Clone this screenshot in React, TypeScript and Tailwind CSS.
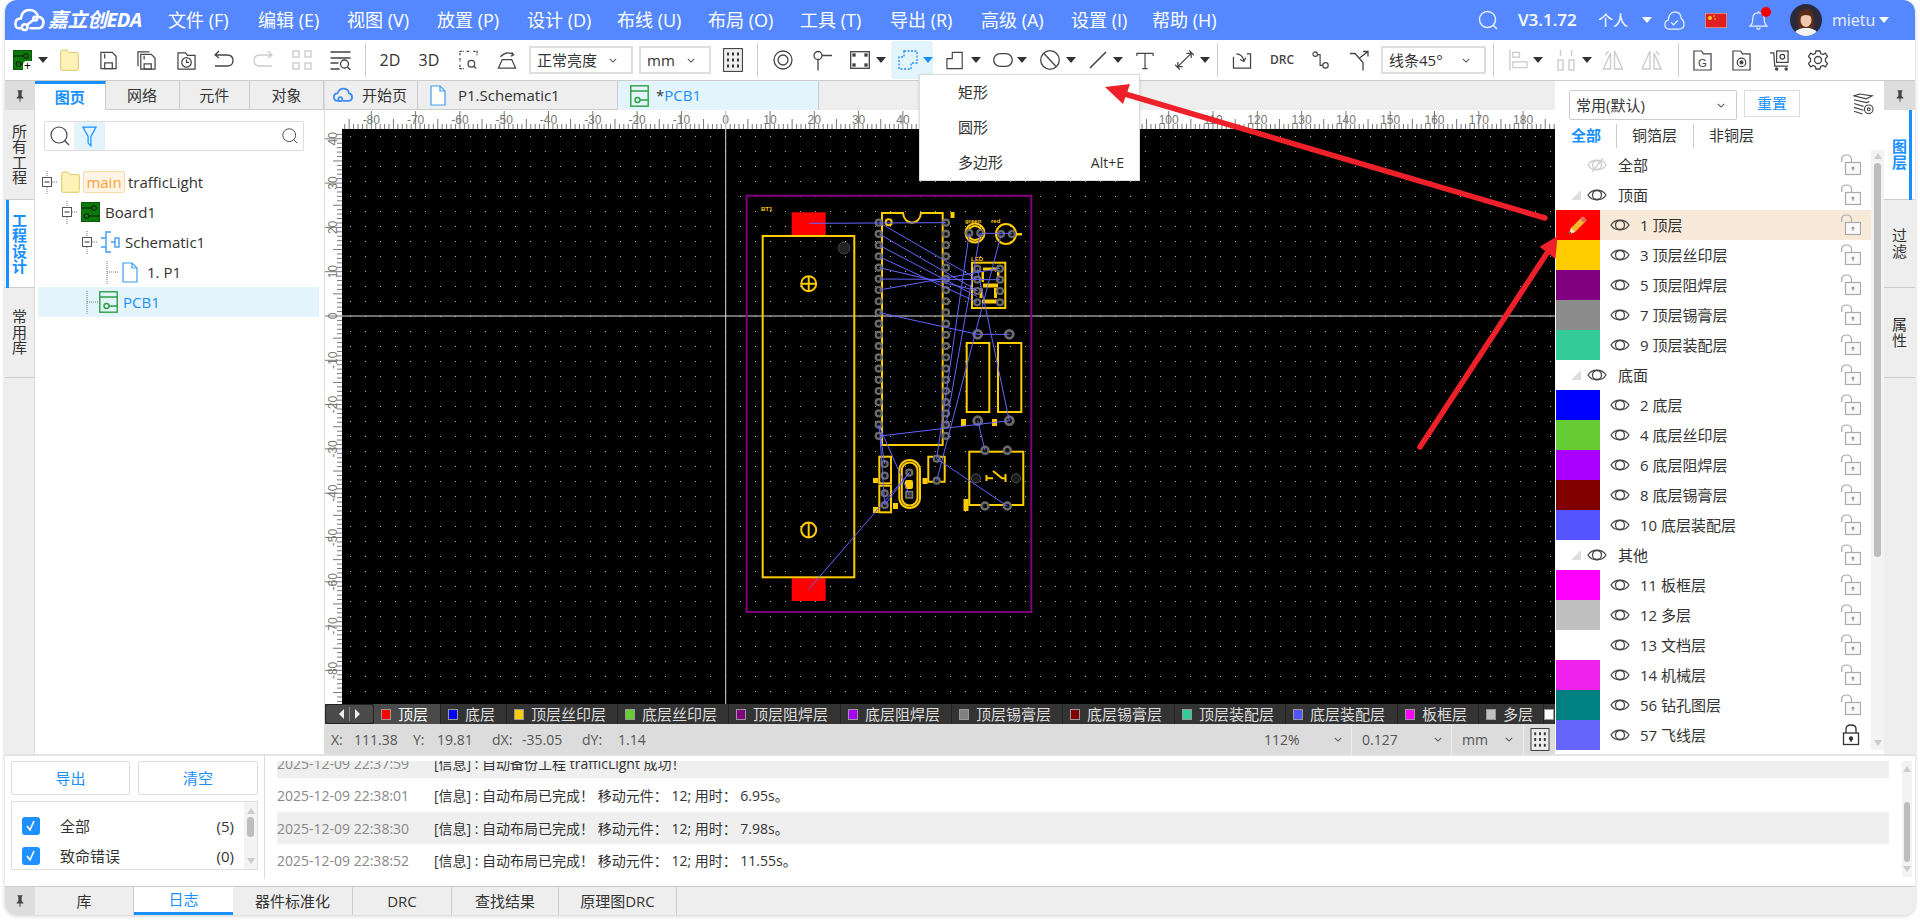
import React from "react";

const FONT = "font-['Open_Sans','Noto_Sans_CJK_SC',sans-serif]";

type P = { className?: string };
const Svg = ({ className = "", vb = "0 0 20 20", children }: { className?: string; vb?: string; children: React.ReactNode }) => (
  <svg viewBox={vb} className={`block shrink-0 ${className}`} fill="none" stroke="#444" strokeWidth={1.3}>
    {children}
  </svg>
);

const Caret = ({ className = "", color = "#333" }: P & { color?: string }) => (
  <svg viewBox="0 0 10 6" className={`block shrink-0 w-[10px] h-[6px] ${className}`}>
    <path d="M0 0H10L5 6Z" fill={color} />
  </svg>
);
const Chevron = ({ className = "" }: P) => (
  <svg viewBox="0 0 10 6" className={`block shrink-0 w-[8px] h-[5px] ${className}`} fill="none" stroke="#555" strokeWidth={1.3}>
    <path d="M1 1L5 5L9 1" />
  </svg>
);
const Divider = ({ className = "" }: P) => <div className={`w-px h-[34px] bg-[#ccc] shrink-0 ${className}`} />;

const Pin = () => (
  <svg viewBox="0 0 12 16" className="block w-[10px] h-[14px]">
    <path d="M3 1H9V2L8 3V8L10 10V11H6.6V15H5.4V11H2V10L4 8V3L3 2Z" fill="#444" />
  </svg>
);

const PcbGreen = ({ className = "" }: P) => (
  <svg viewBox="0 0 19 20" className={`block shrink-0 ${className}`}>
    <rect width="19" height="20" fill="#0a7a0a" stroke="#0a3a0a" />
    <circle cx="13" cy="6" r="2.4" fill="none" stroke="#111" />
    <circle cx="5.5" cy="14" r="2.4" fill="none" stroke="#111" />
    <path d="M0 6H10.5M8 14H19" stroke="#111" fill="none" />
  </svg>
);
const Folder = ({ className = "" }: P) => (
  <svg viewBox="0 0 19 22" className={`block shrink-0 ${className}`}>
    <path d="M.7 3Q.7 1 2.5 1H7L9 3.5H17Q18.3 3.5 18.3 5V20Q18.3 21.3 17 21.3H2Q.7 21.3 .7 20Z" fill="#fdf3b8" stroke="#e0c870" />
  </svg>
);
const Save = ({ className = "" }: P) => (
  <Svg className={className}>
    <path d="M2 1.5H14L18 5.5V18.5H2Z" />
    <path d="M6 12.5H14V18.5H6ZM6 3V8" />
  </Svg>
);
const SaveAs = ({ className = "" }: P) => (
  <Svg className={className}>
    <path d="M1 16V1H13" />
    <path d="M4 3.5H15L19 7.5V19H4Z" />
    <path d="M7.5 13.5H15V19H7.5ZM7.5 5V9" />
  </Svg>
);
const History = ({ className = "" }: P) => (
  <Svg className={className}>
    <path d="M1 2H9L11 4.5H19V19H1Z" />
    <circle cx="10" cy="12" r="5" />
    <path d="M10 9V12H12.5" />
  </Svg>
);
const Undo = ({ className = "", color = "#444" }: P & { color?: string }) => (
  <svg viewBox="0 0 20 20" className={`block shrink-0 ${className}`} fill="none" stroke={color} strokeWidth={1.3}>
    <path d="M5 1L1 5L5 8M1 5H13Q19 5 19 10.5T13 16H1" />
  </svg>
);
const Group4 = ({ className = "" }: P) => (
  <svg viewBox="0 0 20 20" className={`block shrink-0 ${className}`} fill="none" stroke="#ccc" strokeWidth={1.4}>
    <rect x="1" y="1" width="6" height="6" />
    <rect x="13" y="1" width="6" height="6" />
    <rect x="1" y="13" width="6" height="6" />
    <rect x="13" y="13" width="6" height="6" />
  </svg>
);
const FindList = ({ className = "" }: P) => (
  <Svg className={className}>
    <path d="M0 2H20M0 8H20M0 13H8M0 19H9" />
    <circle cx="14" cy="14" r="4" />
    <path d="M17 17L20 20" />
  </Svg>
);
const ZoomArea = ({ className = "" }: P) => (
  <Svg className={className}>
    <path d="M1 5V1H5M8 1H12M15 1H19V5M1 8V12M1 15V19H5" strokeDasharray="2.5 1" />
    <circle cx="13" cy="14" r="3.5" />
    <path d="M15.5 16.5L18 19" />
  </Svg>
);
const Bright = ({ className = "" }: P) => (
  <Svg className={className}>
    <path d="M1 18L5 9H15L19 18ZM1 18H19" />
    <path d="M3 6Q10 -1 17 4M15 1.5L17 4L14 5.5" />
  </Svg>
);
const GridIcon = ({ className = "" }: P) => (
  <svg viewBox="0 0 20 24" className={`block shrink-0 ${className}`}>
    <rect x=".6" y=".6" width="18.8" height="22.8" fill="#eee" stroke="#333" />
    {[5, 10, 15].map((x) => [6, 12, 18].map((y) => <rect key={`${x}-${y}`} x={x - 1} y={y - 1.5} width="2" height="3" fill="#333" />))}
  </svg>
);
const Target = ({ className = "" }: P) => (
  <Svg className={className}>
    <circle cx="10" cy="10" r="9" />
    <circle cx="10" cy="10" r="5" />
  </Svg>
);
const Via = ({ className = "" }: P) => (
  <Svg className={className}>
    <circle cx="6" cy="5" r="4" />
    <path d="M10 5H20M6 9V20" />
  </Svg>
);
const Board = ({ className = "" }: P) => (
  <svg viewBox="0 0 20 18" className={`block shrink-0 ${className}`} fill="none" stroke="#444" strokeWidth={1.3}>
    <rect x=".7" y=".7" width="18.6" height="16.6" />
    {[[4, 4], [16, 4], [4, 14], [16, 14]].map(([x, y]) => (
      <rect key={`${x}${y}`} x={x - 1} y={y - 1} width="2" height="2" fill="#444" />
    ))}
  </svg>
);
const DashPoly = ({ className = "" }: P) => (
  <svg viewBox="0 0 20 20" className={`block shrink-0 ${className}`} fill="none" stroke="#1890ff" strokeWidth={1.3} strokeDasharray="2 1.5">
    <path d="M6 1H19V13H13V19H1V7H6Z" />
  </svg>
);
const PolyIcon = ({ className = "" }: P) => (
  <Svg className={className}>
    <path d="M7 1H18V19H1V8H7Z" />
  </Svg>
);
const RoundRect = ({ className = "" }: P) => (
  <svg viewBox="0 0 20 14" className={`block shrink-0 ${className}`} fill="none" stroke="#444" strokeWidth={1.3}>
    <rect x=".7" y=".7" width="18.6" height="12.6" rx="6.3" />
  </svg>
);
const NoCircle = ({ className = "" }: P) => (
  <Svg className={className}>
    <circle cx="10" cy="10" r="9.3" />
    <path d="M4 3.5L16 16.5" />
  </Svg>
);
const LineIcon = ({ className = "" }: P) => (
  <svg viewBox="0 0 18 18" className={`block shrink-0 ${className}`} fill="none" stroke="#444" strokeWidth={1.6}>
    <path d="M1 17L17 1" />
  </svg>
);
const TIcon = ({ className = "" }: P) => (
  <Svg className={className}>
    <path d="M1 5V2H19V5M10 2V19M7 19H13" />
  </Svg>
);
const Measure = ({ className = "" }: P) => (
  <Svg className={className}>
    <path d="M3 17L17 3M12 3H17V8M3 12V17H8M15 0L20 5M0 15L5 20" />
  </Svg>
);
const ArrowBox = ({ className = "" }: P) => (
  <Svg className={className}>
    <path d="M1 6V18H19V3H15M1 10L1 6" />
    <path d="M4 3Q10 3 12 10M8 9L12 11L14 7" />
  </Svg>
);
const Route = ({ className = "" }: P) => (
  <Svg className={className}>
    <circle cx="3.5" cy="3.5" r="2.5" />
    <circle cx="15" cy="16" r="3" />
    <path d="M6 4H9V16H12" />
  </Svg>
);
const Route45 = ({ className = "" }: P) => (
  <Svg className={className}>
    <path d="M1 3H6L14 12V20M10 8L19 1M14 1H19V6" />
  </Svg>
);
const Align = ({ className = "" }: P) => (
  <svg viewBox="0 0 20 22" className={`block shrink-0 ${className}`} fill="none" stroke="#ccc" strokeWidth={1.4}>
    <path d="M1 0V22" />
    <rect x="4" y="3" width="7" height="5" />
    <rect x="4" y="13" width="15" height="6" />
  </svg>
);
const Distribute = ({ className = "" }: P) => (
  <svg viewBox="0 0 18 22" className={`block shrink-0 ${className}`} fill="none" stroke="#ccc" strokeWidth={1.4}>
    <rect x="1" y="11" width="5" height="10" />
    <rect x="12" y="11" width="5" height="10" />
    <path d="M3.5 1V7M14.5 1V7" />
  </svg>
);
const Flip = ({ className = "" }: P) => (
  <svg viewBox="0 0 20 20" className={`block shrink-0 ${className}`} fill="none" stroke="#ccc" strokeWidth={1.4}>
    <path d="M8 3V19H1ZM12 1V19H20L12 1ZM3 5L6 1" />
  </svg>
);
const Flip2 = ({ className = "" }: P) => (
  <svg viewBox="0 0 20 20" className={`block shrink-0 ${className}`} fill="none" stroke="#ccc" strokeWidth={1.4}>
    <path d="M12 3V19H19ZM8 1V19H0ZM17 5L14 1" />
  </svg>
);
const FileG = ({ className = "" }: P) => (
  <svg viewBox="0 0 20 22" className={`block shrink-0 ${className}`} fill="none" stroke="#444" strokeWidth={1.3}>
    <path d="M1 1H9L11 4H19V21H1Z" />
    <text x="10" y="18" textAnchor="middle" fontSize="12" fill="#444" stroke="none" fontFamily="Liberation Sans">G</text>
  </svg>
);
const FileGear = ({ className = "" }: P) => (
  <svg viewBox="0 0 20 22" className={`block shrink-0 ${className}`} fill="none" stroke="#444" strokeWidth={1.3}>
    <path d="M1 1H9L11 4H19V21H1Z" />
    <circle cx="10" cy="13" r="4.5" />
    <circle cx="10" cy="13" r="1.5" fill="#444" />
  </svg>
);
const Cart = ({ className = "" }: P) => (
  <svg viewBox="0 0 20 22" className={`block shrink-0 ${className}`} fill="none" stroke="#444" strokeWidth={1.3}>
    <path d="M0 3H4L5 17H19" />
    <rect x="7" y="1" width="12" height="12" />
    <circle cx="13" cy="7" r="2.5" />
    <circle cx="7" cy="20" r="1.2" fill="#444" />
    <circle cx="17" cy="20" r="1.2" fill="#444" />
  </svg>
);
const Gear = ({ className = "" }: P) => (
  <Svg className={className}>
    <path d="M8 1H12L12.7 3.5L15 4.5L17.3 3.2L19.5 6.5L17.5 8.5V11.5L19.5 13.5L17.3 16.8L15 15.5L12.7 16.5L12 19H8L7.3 16.5L5 15.5L2.7 16.8L.5 13.5L2.5 11.5V8.5L.5 6.5L2.7 3.2L5 4.5L7.3 3.5Z" />
    <circle cx="10" cy="10" r="3.5" />
  </Svg>
);

const Select = ({ label, className = "" }: { label: string; className?: string }) => (
  <div className={`h-[28px] border-2 border-[#ddd] flex items-center justify-between pl-[6px] pr-[14px] text-[15px] text-[#333] shrink-0 ${className}`}>
    <span>{label}</span>
    <Chevron />
  </div>
);

const Toolbar = () => (
  <div className="h-[41px] shrink-0 bg-white border-b border-[#ccc] flex items-center pl-[8px]">
    <div className="relative shrink-0">
      <PcbGreen className="w-[19px] h-[20px]" />
      <div className="absolute right-0 bottom-0 w-[9px] h-[9px] bg-white rounded-tl-[4px] text-[12px] leading-[9px] text-center text-black">+</div>
    </div>
    <Caret className="ml-[6px]" />
    <Folder className="ml-[12px] w-[19px] h-[22px]" />
    <Save className="ml-[20px] w-[19px] h-[21px]" />
    <SaveAs className="ml-[19px] w-[19px] h-[21px]" />
    <History className="ml-[21px] w-[19px] h-[21px]" />
    <Undo className="ml-[18px] w-[20px] h-[20px]" />
    <Undo className="ml-[19px] w-[20px] h-[20px] -scale-x-100" color="#ccc" />
    <Group4 className="ml-[19px] w-[20px] h-[20px]" />
    <FindList className="ml-[18px] w-[21px] h-[20px]" />
    <Divider className="ml-[14px]" />
    <div className="ml-[12px] w-[24px] text-center text-[16px] text-[#333] shrink-0">2D</div>
    <div className="ml-[15px] w-[24px] text-center text-[16px] text-[#333] shrink-0">3D</div>
    <ZoomArea className="ml-[18px] w-[19px] h-[20px]" />
    <Bright className="ml-[19px] w-[20px] h-[19px]" />
    <Select label="正常亮度" className="ml-[12px] w-[104px]" />
    <Select label="mm" className="ml-[6px] w-[72px]" />
    <GridIcon className="ml-[12px] w-[20px] h-[24px]" />
    <Divider className="ml-[14px]" />
    <Target className="ml-[15px] w-[20px] h-[20px]" />
    <Via className="ml-[19px] w-[20px] h-[21px]" />
    <Board className="ml-[18px] w-[20px] h-[18px]" />
    <Caret className="ml-[6px]" />
    <div className="ml-[5px] w-[42px] h-[38px] bg-[#e3f4fd] rounded-[3px] flex items-center pl-[7px] shrink-0">
      <DashPoly className="w-[20px] h-[20px]" />
      <Caret color="#1890ff" className="ml-[5px]" />
    </div>
    <PolyIcon className="ml-[13px] w-[18px] h-[19px]" />
    <Caret className="ml-[7px]" />
    <RoundRect className="ml-[12px] w-[20px] h-[14px]" />
    <Caret className="ml-[4px]" />
    <NoCircle className="ml-[13px] w-[20px] h-[20px]" />
    <Caret className="ml-[6px]" />
    <LineIcon className="ml-[13px] w-[18px] h-[18px]" />
    <Caret className="ml-[6px]" />
    <TIcon className="ml-[13px] w-[18px] h-[21px]" />
    <Measure className="ml-[21px] w-[19px] h-[20px]" />
    <Caret className="ml-[6px]" />
    <Divider className="ml-[7px]" />
    <ArrowBox className="ml-[14px] w-[20px] h-[19px]" />
    <div className="ml-[18px] w-[22px] text-[12px] font-semibold text-[#444] shrink-0">DRC</div>
    <Route className="ml-[20px] w-[18px] h-[20px]" />
    <Route45 className="ml-[19px] w-[20px] h-[21px]" />
    <Select label="线条45°" className="ml-[12px] w-[105px]" />
    <Divider className="ml-[7px]" />
    <Align className="ml-[15px] w-[19px] h-[22px]" />
    <Caret className="ml-[5px]" />
    <Distribute className="ml-[14px] w-[18px] h-[22px]" />
    <Caret className="ml-[7px]" />
    <Flip className="ml-[10px] w-[21px] h-[20px]" />
    <Flip2 className="ml-[19px] w-[20px] h-[20px]" />
    <Divider className="ml-[16px]" />
    <FileG className="ml-[14px] w-[19px] h-[21px]" />
    <FileGear className="ml-[20px] w-[19px] h-[21px]" />
    <Cart className="ml-[19px] w-[19px] h-[21px]" />
    <Gear className="ml-[19px] w-[20px] h-[20px]" />
  </div>
);

const menus: [string, string][] = [
  ["文件 (F)", "w-[90px]"],
  ["编辑 (E)", "w-[89px]"],
  ["视图 (V)", "w-[90px]"],
  ["放置 (P)", "w-[90px]"],
  ["设计 (D)", "w-[90px]"],
  ["布线 (U)", "w-[91px]"],
  ["布局 (O)", "w-[92px]"],
  ["工具 (T)", "w-[90px]"],
  ["导出 (R)", "w-[91px]"],
  ["高级 (A)", "w-[90px]"],
  ["设置 (I)", "w-[81px]"],
  ["帮助 (H)", "w-[70px]"],
];

const Header = () => (
  <div className="h-[40px] shrink-0 bg-[#5588ff] text-white flex items-center">
    <div className="w-[163px] shrink-0 flex items-center pl-[9px]">
      <svg viewBox="0 0 32 26" className="block w-[31px] h-[25px]" fill="none" stroke="#fff" strokeWidth={2.6}>
        <path d="M8 21H5Q1 21 1.5 15.5Q2 11 7 11Q8 2 16 2Q23 2 25 9Q31 10 30.5 15.5Q30 21 25 21H16" />
        <circle cx="11" cy="20" r="3" />
        <path d="M13 18L20 12.5" />
        <circle cx="22" cy="11" r="2" />
      </svg>
      <span className="ml-[3px] text-[20px] font-bold italic whitespace-nowrap tracking-[-0.5px]">嘉立创EDA</span>
    </div>
    <div className="flex text-[18px] whitespace-nowrap">
      {menus.map(([m, w]) => (
        <div key={m} className={`${w} shrink-0`}>{m}</div>
      ))}
    </div>
    <div className="flex-1" />
    <svg viewBox="0 0 20 20" className="block w-[20px] h-[20px] shrink-0" fill="none" stroke="#e8efff" strokeWidth={1.4}>
      <circle cx="9.5" cy="9.5" r="8" />
      <path d="M15 15L19 19" />
    </svg>
    <div className="ml-[20px] w-[60px] text-[17px] font-semibold shrink-0">V3.1.72</div>
    <div className="ml-[20px] w-[30px] text-[15px] shrink-0">个人</div>
    <Caret color="#fff" className="ml-[14px]" />
    <svg viewBox="0 0 22 22" className="ml-[12px] block w-[21px] h-[21px] shrink-0" fill="none" stroke="#e8efff" strokeWidth={1.3}>
      <path d="M6 20H5Q1 20 1 15Q1 11 4.5 10.5Q5 3 11 2Q18 2 18 9Q21 11 21 15Q21 20 16 20Z" />
      <path d="M7.5 13L10 15.5L14.5 11" />
    </svg>
    <svg viewBox="0 0 22 15" className="ml-[20px] block w-[22px] h-[15px] shrink-0">
      <rect width="22" height="15" fill="#e02020" stroke="#ddd" />
      <circle cx="5" cy="5" r="2" fill="#f5d020" />
      <circle cx="9" cy="3" r=".8" fill="#f5d020" />
      <circle cx="10" cy="6" r=".8" fill="#f5d020" />
    </svg>
    <div className="relative ml-[22px] shrink-0">
      <svg viewBox="0 0 20 22" className="block w-[19px] h-[21px]" fill="none" stroke="#e8efff" strokeWidth={1.3}>
        <path d="M1 17Q4 15 4 9Q4 3 10 3Q16 3 16 9Q16 15 19 17ZM10 1V3M8 18.5Q10 22 12 18.5" />
      </svg>
      <div className="absolute -top-[3px] right-[-3px] w-[10px] h-[10px] rounded-full bg-[#f00000]" />
    </div>
    <svg viewBox="0 0 32 32" className="ml-[22px] block w-[32px] h-[32px] shrink-0">
      <clipPath id="av"><circle cx="16" cy="16" r="16" /></clipPath>
      <g clipPath="url(#av)">
        <rect width="32" height="32" fill="#2a2a3a" />
        <path d="M8 16Q8 5 16 5Q24 5 24 16V24H8Z" fill="#5a2c18" />
        <ellipse cx="16" cy="16" rx="5.5" ry="7" fill="#f0c8b0" />
        <path d="M10 13Q12 8 16 8Q20 8 22 13Q16 9 10 13Z" fill="#5a2c18" />
        <path d="M3 32Q5 25 13 24H19Q27 25 29 32Z" fill="#f4f4f4" />
      </g>
    </svg>
    <div className="ml-[10px] w-[36px] text-[16px] text-[#eef] shrink-0">mietu</div>
    <Caret color="#fff" className="ml-[11px] mr-[26px]" />
  </div>
);

const VTab = ({ text, active, h }: { text: string; active?: boolean; h: string }) => (
  <div className={`w-full shrink-0 flex items-center justify-center border-b border-[#ccc] ${h} ${active ? "bg-white" : "bg-[#eee]"}`}>
    <div className={`w-[16px] text-center text-[15px] leading-[15.5px] ${active ? "text-[#1890ff] font-bold" : "text-[#333]"}`}>{text}</div>
  </div>
);

const TreeBox = ({ className = "" }: P) => (
  <svg viewBox="0 0 16 24" className={`block w-[16px] h-[24px] shrink-0 ${className}`} fill="none">
    <path d="M6 1V24M11 12H16" stroke="#777" strokeDasharray="1 1" />
    <rect x="1.5" y="7.5" width="9" height="9" fill="#fff" stroke="#555" />
    <path d="M3.5 12H8.5" stroke="#333" />
  </svg>
);
const TreeDots = ({ className = "" }: P) => (
  <svg viewBox="0 0 16 24" className={`block w-[16px] h-[24px] shrink-0 ${className}`} fill="none">
    <path d="M3 1V24M3 12H14" stroke="#777" strokeDasharray="1 1" />
  </svg>
);
const DocIcon = ({ className = "" }: P) => (
  <svg viewBox="0 0 16 21" className={`block shrink-0 ${className}`} fill="#fff" stroke="#3f9cf0" strokeWidth={1.2}>
    <path d="M1 1H10L15 6V20H1Z" />
    <path d="M10 1V6H15" fill="none" />
  </svg>
);
const SchIcon = ({ className = "" }: P) => (
  <svg viewBox="0 0 19 22" className={`block shrink-0 ${className}`} fill="none" stroke="#3f9cf0" strokeWidth={1.4}>
    <path d="M10 1H5V21H10M0 7H5M0 16H5" />
    <rect x="14" y="7" width="4" height="9" />
    <path d="M10 11H14" />
  </svg>
);
const PcbIcon = ({ className = "" }: P) => (
  <svg viewBox="0 0 19 22" className={`block shrink-0 ${className}`} fill="none" stroke="#2aa040" strokeWidth={1.4}>
    <rect x=".8" y=".8" width="17.4" height="20.4" />
    <path d="M.8 6H18.2M18 15H10" />
    <circle cx="7.5" cy="15" r="2.5" />
  </svg>
);
const MiniSearch = ({ className = "" }: P) => (
  <svg viewBox="0 0 20 20" className={`block shrink-0 ${className}`} fill="none" stroke="#444" strokeWidth={1.2}>
    <circle cx="9" cy="9" r="8" />
    <path d="M14.5 14.5L19 19" />
  </svg>
);

const LeftPanel = () => (
  <div className="w-[290px] shrink-0 bg-white border-r border-[#ddd] flex flex-col">
    <div className="h-[29px] shrink-0 flex text-[15px] text-[#333]">
      <div className="w-[71px] bg-white border-t-[3px] border-[#1890ff] border-r border-r-[#ccc] text-[#1890ff] font-bold flex items-center justify-center">图页</div>
      <div className="w-[74px] bg-[#eee] border-b border-r border-[#ccc] flex items-center justify-center">网络</div>
      <div className="w-[71px] bg-[#eee] border-b border-r border-[#ccc] flex items-center justify-center">元件</div>
      <div className="w-[74px] bg-[#eee] border-b border-r border-[#ccc] flex items-center justify-center">对象</div>
    </div>
    <div className="mt-[11px] ml-[9px] w-[260px] h-[30px] shrink-0 border border-[#ddd] rounded-[2px] flex items-center">
      <div className="w-[29px] flex justify-center"><MiniSearch className="w-[20px] h-[20px]" /></div>
      <div className="w-[31px] h-full bg-[#e3f4fd] flex items-center justify-center border-x border-[#eee]">
        <svg viewBox="0 0 16 22" className="block w-[15px] h-[21px]" fill="none" stroke="#1890ff" strokeWidth={1.3}>
          <path d="M1 1H15L9.5 11V21L6.5 18V11Z" />
        </svg>
      </div>
      <div className="flex-1" />
      <MiniSearch className="w-[16px] h-[16px] mr-[5px]" />
    </div>
    <div className="mt-[16px] text-[15px] text-[#333] flex flex-col">
      <div className="h-[30px] flex items-center pl-[6px]">
        <TreeBox />
        <Folder className="ml-[4px] w-[19px] h-[22px]" />
        <div className="ml-[3px] w-[42px] h-[22px] bg-[#fff4e5] border border-[#fcd9a8] rounded-[2px] text-[#ffa033] text-center leading-[20px]">main</div>
        <span className="ml-[3px]">trafficLight</span>
      </div>
      <div className="h-[30px] flex items-center pl-[26px]">
        <TreeBox />
        <PcbGreen className="ml-[4px] w-[19px] h-[20px]" />
        <span className="ml-[5px]">Board1</span>
      </div>
      <div className="h-[30px] flex items-center pl-[46px]">
        <TreeBox />
        <SchIcon className="ml-[4px] w-[19px] h-[22px]" />
        <span className="ml-[5px]">Schematic1</span>
      </div>
      <div className="h-[30px] flex items-center pl-[69px]">
        <TreeDots />
        <DocIcon className="ml-[2px] w-[16px] h-[21px]" />
        <span className="ml-[9px]">1. P1</span>
      </div>
      <div className="h-[30px] flex items-center ml-[3px] w-[281px] bg-[#e3f4fd] pl-[46px]">
        <TreeDots />
        <PcbIcon className="-ml-[1px] w-[19px] h-[22px]" />
        <span className="ml-[5px] text-[#1890ff]">PCB1</span>
      </div>
    </div>
  </div>
);

const z4 = (x: number, y: number): [number, number] => [720 + x / 3, 180 + y / 3];
const hTicks = Array.from({ length: 274 }, (_, k) => k - 86);
const vTicks = Array.from({ length: 130 }, (_, k) => k - 88);
const HX = (i: number) => 725.7 + i * 4.43;
const VY = (i: number) => 316 - i * 4.43;
const rats: number[][] = [
  [...z4(268, 130), ...z4(678, 128)],
  [...z4(478, 128), ...z4(772, 298)],
  [...z4(478, 162), ...z4(772, 332)],
  [...z4(478, 196), ...z4(772, 350)],
  [...z4(478, 230), ...z4(772, 367)],
  [...z4(478, 263), ...z4(772, 332)],
  [...z4(478, 297), ...z4(840, 299)],
  [...z4(478, 330), ...z4(840, 265)],
  [...z4(478, 398), ...z4(773, 463)],
  [...z4(773, 463), ...z4(868, 463)],
  [...z4(781, 160), ...z4(876, 160)],
  [969.3, 233, 936.7, 458.7],
  [980.3, 233, 946, 425],
  [1001, 235, 936.7, 480.7],
  [977.3, 268.7, 1009.3, 420.7],
  [880, 436, 1009.3, 420.7],
  [977.7, 420.7, 985, 450.3],
  [878.7, 425, 909.3, 494.7],
  [878.7, 425, 884.7, 464],
  [880, 436, 884.7, 505],
  [909.3, 472.7, 808.7, 589.3],
  [909.3, 472.7, 884.7, 505],
  [936.7, 458.7, 1007.3, 506],
];
const pad = (x: number, y: number, r = 3, w = 2.2) => <circle key={`${x}-${y}`} cx={x} cy={y} r={r} fill="#111" stroke="#6b6b6b" strokeWidth={w} />;
const dip = Array.from({ length: 20 }, (_, k) => 222.7 + k * 11.22);

const Canvas = () => (
  <svg viewBox="325 110 1230 594" className="block w-[1230px] h-[594px] shrink-0" fontFamily="Liberation Sans, sans-serif">
    <defs>
      <pattern id="dots" x="350" y="136" width="15" height="15" patternUnits="userSpaceOnUse">
        <rect width="1" height="1" fill="#aaa" />
      </pattern>
    </defs>
    <rect x="325" y="110" width="1230" height="594" fill="#fff" />
    {hTicks.map((i) => {
      const len = i % 10 === 0 ? 18 : i % 5 === 0 ? 10 : 5;
      return <line key={i} x1={HX(i)} x2={HX(i)} y1={129} y2={129 - len} stroke="#777" strokeWidth={1} />;
    })}
    {hTicks.filter((i) => i % 10 === 0).map((i) => (
      <text key={i} x={HX(i)} y={124} fontSize="12" fill="#777" textAnchor="middle">{i}</text>
    ))}
    {vTicks.map((i) => {
      const len = i % 10 === 0 ? 17 : i % 5 === 0 ? 9 : 5;
      return <line key={i} x1={342} x2={342 - len} y1={VY(i)} y2={VY(i)} stroke="#777" strokeWidth={1} />;
    })}
    {vTicks.filter((i) => i % 10 === 0).map((i) => (
      <text key={i} x={0} y={0} transform={`translate(337 ${VY(i)}) rotate(-90)`} fontSize="12" fill="#777" textAnchor="middle">{i}</text>
    ))}
    <rect x="342" y="129" width="1213" height="575" fill="#000" />
    <rect x="342" y="129" width="1213" height="575" fill="url(#dots)" />
    <line x1="725.7" x2="725.7" y1="110" y2="704" stroke="#ddd" />
    <line x1="342" x2="1555" y1="316" y2="316" stroke="#ddd" />

    <rect x="746.7" y="195.7" width="284.6" height="416.3" fill="none" stroke="#800080" strokeWidth="2" />
    <rect x="791.7" y="212.3" width="34" height="23.7" fill="#f00" />
    <rect x="791.7" y="578.3" width="34" height="22.7" fill="#f00" />
    <g fill="none" stroke="#ffcc00" strokeWidth="2">
      <rect x="762.7" y="236" width="91.6" height="341.3" />
      <circle cx="808.7" cy="283.7" r="7.5" />
      <path d="M801.5 283.7H816M808.7 276.5V291" />
      <circle cx="808.7" cy="530" r="7.5" />
      <path d="M808.7 522.5V537.5" />
      <path d="M882 445V213H903C904 226 920 226 921 213H942.7V445Z" />
      <circle cx="888.7" cy="222.3" r="3" />
      <circle cx="975" cy="233" r="9.5" />
      <circle cx="975" cy="233" r="7" />
      <circle cx="1006" cy="234" r="10" />
      <rect x="972" y="262.7" width="33.3" height="45.3" />
      <rect x="966.7" y="343" width="22.6" height="69" />
      <rect x="998" y="343" width="23.3" height="69" />
      <rect x="879.3" y="456.7" width="11.7" height="26.6" />
      <rect x="879.3" y="485.7" width="11.7" height="26.6" />
      <rect x="899.3" y="460" width="20.7" height="48" rx="10.35" />
      <rect x="901.8" y="462.5" width="15.7" height="43" rx="7.8" />
      <path d="M928.3 481.7V456.7H944.7V481.7Z" />
      <rect x="969.3" y="451.7" width="54" height="53.3" />
      <path d="M986.5 475V481M986.5 478.3H993M993 471L1002 478.3H1005.5M1005.5 474V482" />
    </g>
    <g fill="#ffcc00">
      <rect x="983" y="267.5" width="15" height="3" />
      <rect x="981.5" y="272" width="2.5" height="10" />
      <rect x="997" y="272" width="2.5" height="10" />
      <rect x="983" y="283.5" width="15" height="4" />
      <rect x="979.5" y="288" width="3" height="10" />
      <rect x="994" y="288" width="3" height="10" />
      <rect x="982" y="299.5" width="15" height="4" />
      <rect x="905" y="480" width="8" height="9" rx="2" />
      <rect x="873" y="478" width="5" height="5" />
      <rect x="873" y="507" width="5" height="6" />
      <rect x="893" y="503" width="5" height="6" />
      <rect x="922.5" y="478" width="5" height="6" />
      <rect x="961" y="419" width="5" height="7" />
      <rect x="992" y="419" width="5" height="7" />
      <rect x="963.5" y="499" width="5" height="12" />
      <rect x="950.5" y="212" width="4" height="6" />
      <rect x="1016" y="233" width="6" height="2.5" />
    </g>
    <g fill="#ffcc00" fontSize="6" fontWeight="bold">
      <text x="761" y="211">BT1</text>
      <text x="965" y="223">green</text>
      <text x="991" y="223">red</text>
      <text x="971" y="261">LED</text>
    </g>
    <circle cx="844" cy="248" r="5.8" fill="#222" stroke="#444" />
    <circle cx="976" cy="478.3" r="4.5" fill="#1a1a1a" stroke="#555" />
    <circle cx="1016" cy="478.3" r="4.5" fill="#1a1a1a" stroke="#555" />
    {dip.map((y) => pad(878.7, y))}
    {dip.map((y) => pad(946, y))}
    {[[969.3, 233], [980.3, 233], [1001, 234], [1012, 234]].map(([x, y]) => pad(x, y))}
    {[268.7, 279.7, 291, 302.3].flatMap((y) => [pad(977.3, y), pad(1000, y)])}
    {[[977.7, 334.3], [1009.3, 334.3], [977.7, 420.7], [1009.3, 420.7]].map(([x, y]) => pad(x, y, 4, 2.8))}
    {[464, 475.7, 493.3, 505].map((y) => pad(884.7, y))}
    {[[936.7, 458.7], [936.7, 480.7], [909.3, 472.7]].map(([x, y]) => pad(x, y))}
    <rect x="906" y="491.5" width="6.5" height="6.5" fill="#333" stroke="#777" strokeWidth="1.5" />
    {[[985, 450.3], [1007.3, 450.3], [985, 506], [1007.3, 506]].map(([x, y]) => pad(x, y, 3.5, 2.5))}
    <g stroke="#6464ff" strokeWidth="1">
      {rats.map((r, i) => <line key={i} x1={r[0]} y1={r[1]} x2={r[2]} y2={r[3]} />)}
    </g>
  </svg>
);

const stripTabs: [string, string, string][] = [
  ["底层", "#0000ff", "w-[66px]"],
  ["顶层丝印层", "#ffcc00", "w-[111px]"],
  ["底层丝印层", "#66cc33", "w-[111px]"],
  ["顶层阻焊层", "#800080", "w-[112px]"],
  ["底层阻焊层", "#aa00ff", "w-[111px]"],
  ["顶层锡膏层", "#808080", "w-[111px]"],
  ["底层锡膏层", "#800000", "w-[112px]"],
  ["顶层装配层", "#33cc99", "w-[111px]"],
  ["底层装配层", "#5555ff", "w-[112px]"],
  ["板框层", "#ff00ff", "w-[81px]"],
  ["多层", "#c0c0c0", "w-[65px]"],
];

const Swatch = ({ c }: { c: string }) => <span className="block w-[10px] h-[11px] border border-[#999] shrink-0" style={{ backgroundColor: c }} />;

const Center = () => (
  <div className="w-[1230px] shrink-0 flex flex-col">
    <div className="h-[29px] shrink-0 flex text-[15px] text-[#333] bg-[#eee]">
      <div className="w-[93px] border-b border-r border-[#ccc] flex items-center pl-[8px]">
        <svg viewBox="0 0 22 18" className="block w-[20px] h-[17px]" fill="none" stroke="#3f8ff0" strokeWidth={2}>
          <path d="M6 15H5Q1 15 1 10.5Q1 7 5 6.5Q7 1 12 1.5Q17 2 17.5 6.5Q21 7.5 21 11Q21 15 16 15H11" />
          <circle cx="8" cy="13" r="2.2" />
        </svg>
        <span className="ml-[9px]">开始页</span>
      </div>
      <div className="w-[200px] border-b border-r border-[#ccc] flex items-center pl-[12px]">
        <DocIcon className="w-[16px] h-[21px]" />
        <span className="ml-[12px]">P1.Schematic1</span>
      </div>
      <div className="w-[201px] border-r border-[#ccc] bg-[#e3f4fd] flex items-center pl-[12px]">
        <PcbIcon className="w-[19px] h-[22px]" />
        <span className="ml-[7px]">*<span className="text-[#1890ff]">PCB1</span></span>
      </div>
    </div>
    <Canvas />
    <div className="h-[20px] shrink-0 bg-[#333] flex items-center text-[15px] text-[#ddd] overflow-hidden whitespace-nowrap">
      <div className="w-[49px] h-full shrink-0 bg-[#4a4a4a] border border-[#222] rounded-[3px] flex items-center justify-center gap-[5px]">
        <svg viewBox="0 0 5 10" className="block w-[5px] h-[10px]"><path d="M5 0V10L0 5Z" fill="#eee" /></svg>
        <div className="w-px h-[14px] bg-[#888]" />
        <svg viewBox="0 0 5 10" className="block w-[5px] h-[10px]"><path d="M0 0V10L5 5Z" fill="#eee" /></svg>
      </div>
      <div className="w-[67px] h-full shrink-0 bg-[#4a4a4a] flex items-center pl-[7px] gap-[7px] text-white border-r border-[#222]">
        <Swatch c="#ff0000" />顶层
      </div>
      {stripTabs.map(([t, c, w]) => (
        <div key={t} className={`${w} h-full shrink-0 flex items-center pl-[7px] gap-[7px] border-r border-[#222]`}>
          <Swatch c={c} />{t}
        </div>
      ))}
      <Swatch c="#ffffff" />
    </div>
    <div className="h-[30px] shrink-0 bg-[#dcdcdc] flex items-center text-[14px] text-[#555] whitespace-nowrap">
      <span className="ml-[6px] w-[23px]">X:</span>
      <span className="w-[59px]">111.38</span>
      <span className="w-[24px]">Y:</span>
      <span className="w-[55px]">19.81</span>
      <span className="w-[30px]">dX:</span>
      <span className="w-[60px]">-35.05</span>
      <span className="w-[36px]">dY:</span>
      <span>1.14</span>
      <div className="flex-1" />
      <div className="w-[100px] h-full flex items-center justify-between pl-[12px] pr-[9px] border-r border-[#eee]">
        <span>112%</span><Chevron />
      </div>
      <div className="w-[100px] h-full flex items-center justify-between pl-[10px] pr-[9px] border-r border-[#eee]">
        <span>0.127</span><Chevron />
      </div>
      <div className="w-[72px] h-full flex items-center justify-between pl-[10px] pr-[10px] border-r border-[#eee]">
        <span>mm</span><Chevron />
      </div>
      <GridIcon className="ml-[6px] mr-[5px] w-[20px] h-[23px]" />
    </div>
  </div>
);

const Eye = ({ className = "", off }: P & { off?: boolean }) => (
  <svg viewBox="0 0 20 14" className={`block w-[20px] h-[14px] shrink-0 ${className}`} fill="none" stroke={off ? "#ccc" : "#444"} strokeWidth={1.3}>
    <path d="M1 7C5 .5 15 .5 19 7C15 13.5 5 13.5 1 7Z" />
    <circle cx="10" cy="7" r="4.5" />
    {off && <path d="M16 0L5 14" />}
  </svg>
);
const Lock = ({ closed }: { closed?: boolean }) => (
  closed ? (
    <svg viewBox="0 0 20 22" className="block w-[20px] h-[22px] shrink-0" fill="none" stroke="#333" strokeWidth={1.3}>
      <rect x="2.5" y="9" width="15" height="11.5" />
      <path d="M5 9V5Q5 1 10 1Q15 1 15 5V9" />
      <circle cx="10" cy="14.5" r="1.5" fill="#333" />
      <path d="M10 15V18" />
    </svg>
  ) : (
    <svg viewBox="0 0 20 22" className="block w-[20px] h-[22px] shrink-0" fill="none" stroke="#aaa" strokeWidth={1.2}>
      <rect x="4.5" y="8.5" width="15" height="12" fill="#fafafa" />
      <path d="M.7 8V5Q.7 1 5.5 1Q10 1 10.5 5V8" />
      <circle cx="12" cy="14" r="1.5" fill="#999" stroke="none" />
      <path d="M12 14V17" />
    </svg>
  )
);

type Row = { kind: "group" | "layer"; label: string; color?: string; off?: boolean; tri?: boolean; active?: boolean; closed?: boolean };
const rows: Row[] = [
  { kind: "group", label: "全部", off: true },
  { kind: "group", label: "顶面", tri: true },
  { kind: "layer", label: "1 顶层", color: "#ff0000", active: true },
  { kind: "layer", label: "3 顶层丝印层", color: "#ffcc00" },
  { kind: "layer", label: "5 顶层阻焊层", color: "#800080" },
  { kind: "layer", label: "7 顶层锡膏层", color: "#8c8c8c" },
  { kind: "layer", label: "9 顶层装配层", color: "#33cc99" },
  { kind: "group", label: "底面", tri: true },
  { kind: "layer", label: "2 底层", color: "#0000ff" },
  { kind: "layer", label: "4 底层丝印层", color: "#66cc33" },
  { kind: "layer", label: "6 底层阻焊层", color: "#aa00ff" },
  { kind: "layer", label: "8 底层锡膏层", color: "#800000" },
  { kind: "layer", label: "10 底层装配层", color: "#5555ff" },
  { kind: "group", label: "其他", tri: true },
  { kind: "layer", label: "11 板框层", color: "#ff00ff" },
  { kind: "layer", label: "12 多层", color: "#c0c0c0" },
  { kind: "layer", label: "13 文档层", color: "#ffffff" },
  { kind: "layer", label: "14 机械层", color: "#f022ee" },
  { kind: "layer", label: "56 钻孔图层", color: "#008080" },
  { kind: "layer", label: "57 飞线层", color: "#6666ff", closed: true },
];

const RightPanel = () => (
  <div className="w-[329px] shrink-0 bg-white flex flex-col text-[15px] text-[#333]">
    <div className="h-[40px] shrink-0 flex items-start pt-[9px] pl-[14px]">
      <div className="w-[168px] h-[30px] border border-[#ccc] rounded-[2px] flex items-center justify-between pl-[6px] pr-[11px]">
        <span>常用(默认)</span><Chevron />
      </div>
      <div className="ml-[7px] w-[56px] h-[27px] border border-[#ddd] text-[#1890ff] flex items-center justify-center">重置</div>
      <svg viewBox="0 0 22 24" className="ml-[53px] mt-[3px] block w-[21px] h-[23px] shrink-0" fill="none" stroke="#444" strokeWidth={1.2}>
        <path d="M1 3L7 1L20 3L14 6L1 3ZM1 7L14 10L17 9M1 11L11 14M1 15L11 18M1 19L10 22" />
        <circle cx="16.5" cy="17" r="4.5" />
        <circle cx="16.5" cy="17" r="1.5" />
      </svg>
    </div>
    <div className="h-[29px] shrink-0 flex items-center pl-[16px]">
      <span className="w-[30px] text-[#1890ff] font-bold">全部</span>
      <div className="ml-[15px] w-px h-[24px] bg-[#ccc]" />
      <span className="ml-[15px] w-[46px]">铜箔层</span>
      <div className="ml-[15px] w-px h-[24px] bg-[#ccc]" />
      <span className="ml-[15px]">非铜层</span>
    </div>
    <div className="flex">
      <div className="w-[316px] shrink-0">
        {rows.map((r) =>
          r.kind === "group" ? (
            <div key={r.label} className="h-[30px] flex items-center">
              <div className="w-[32px] shrink-0 flex justify-end pr-[6px]">
                {r.tri && <svg viewBox="0 0 10 10" className="block w-[10px] h-[10px]"><path d="M10 0V10H0Z" fill="#ddd" /></svg>}
              </div>
              <Eye off={r.off} />
              <span className="ml-[11px] flex-1">{r.label}</span>
              <div className="mr-[10px]"><Lock /></div>
            </div>
          ) : (
            <div key={r.label} className={`h-[30px] flex items-center ${r.active ? "bg-[#f8ead8]" : ""}`}>
              <div className="ml-px w-[44px] h-full shrink-0 flex items-center justify-center" style={{ backgroundColor: r.color }}>
                {r.active && (
                  <svg viewBox="0 0 20 20" className="block w-[20px] h-[20px]">
                    <path d="M1 19L3 13L14 2L18 6L7 17Z" fill="#f5b82e" />
                    <path d="M12 4L14 2Q15 1 16 2L18 4Q19 5 18 6L16 8Z" fill="#ee6a5f" />
                    <path d="M1 19L3 13L7 17Z" fill="#f6e3c0" />
                    <path d="M1 19L1.8 16.5L3.5 18.2Z" fill="#333" />
                  </svg>
                )}
              </div>
              <Eye className="ml-[10px]" />
              <span className="ml-[10px] flex-1">{r.label}</span>
              <div className="mr-[10px]"><Lock closed={r.closed} /></div>
            </div>
          )
        )}
      </div>
      <div className="w-[13px] shrink-0 bg-[#f3f3f3] flex flex-col items-center pt-[3px]">
        <svg viewBox="0 0 8 6" className="block w-[8px] h-[6px]"><path d="M4 0L8 6H0Z" fill="#ccc" /></svg>
        <div className="mt-[4px] w-[7px] h-[394px] bg-[#bdbdbd] rounded-[4px]" />
        <div className="flex-1" />
        <svg viewBox="0 0 8 6" className="mb-[4px] block w-[8px] h-[6px]"><path d="M4 6L8 0H0Z" fill="#ccc" /></svg>
      </div>
    </div>
  </div>
);

const logRows = [
  { t: "2025-12-09 22:37:59", m: "[信息] : 自动备份工程 trafficLight 成功！", h: "h-[17px] items-start", s: true, clip: "-mt-[6px]" },
  { t: "2025-12-09 22:38:01", m: "[信息] : 自动布局已完成！ 移动元件： 12; 用时： 6.95s。", h: "h-[34px] items-center", s: false, clip: "" },
  { t: "2025-12-09 22:38:30", m: "[信息] : 自动布局已完成！ 移动元件： 12; 用时： 7.98s。", h: "h-[32px] items-center", s: true, clip: "" },
  { t: "2025-12-09 22:38:52", m: "[信息] : 自动布局已完成！ 移动元件： 12; 用时： 11.55s。", h: "h-[33px] items-center", s: false, clip: "" },
];

const Bottom = () => (
  <div className="h-[132px] shrink-0 bg-white border-t-2 border-[#e4e4e4] flex text-[14px] text-[#333]">
    <div className="w-[260px] shrink-0 border-r border-[#ddd] pl-[6px] pt-[5px] h-[123px]">
      <div className="flex gap-[8px]">
        <div className="w-[119px] h-[34px] border border-[#ddd] rounded-[2px] text-[15px] text-[#1890ff] flex items-center justify-center">导出</div>
        <div className="w-[120px] h-[34px] border border-[#ddd] rounded-[2px] text-[15px] text-[#1890ff] flex items-center justify-center">清空</div>
      </div>
      <div className="mt-[6px] w-[247px] h-[69px] border border-[#ddd] flex text-[15px]">
        <div className="flex-1 pt-[9px]">
          {[["全部", "(5)"], ["致命错误", "(0)"]].map(([a, b]) => (
            <div key={a} className="h-[30px] flex items-center pl-[10px] pr-[10px]">
              <div className="w-[18px] h-[18px] bg-[#1e90ff] rounded-[3px] flex items-center justify-center shrink-0">
                <svg viewBox="0 0 12 12" className="block w-[12px] h-[12px]" fill="none" stroke="#fff" strokeWidth={1.6}><path d="M2 6L5 10L9 1" /></svg>
              </div>
              <span className="ml-[20px] flex-1">{a}</span>
              <span>{b}</span>
            </div>
          ))}
        </div>
        <div className="w-[13px] shrink-0 bg-[#f3f3f3] flex flex-col items-center pt-[6px] pb-[5px]">
          <svg viewBox="0 0 8 6" className="block w-[8px] h-[6px]"><path d="M4 0L8 6H0Z" fill="#ccc" /></svg>
          <div className="mt-[3px] w-[7px] h-[20px] bg-[#bdbdbd] rounded-[4px]" />
          <div className="flex-1" />
          <svg viewBox="0 0 8 6" className="block w-[8px] h-[6px]"><path d="M4 6L8 0H0Z" fill="#ccc" /></svg>
        </div>
      </div>
    </div>
    <div className="flex-1 pl-[12px] pt-[5px] flex">
      <div className="w-[1612px] shrink-0">
        {logRows.map((r) => (
          <div key={r.t} className={`flex ${r.h} overflow-hidden ${r.s ? "bg-[#efefef]" : ""}`}>
            <span className={`w-[157px] shrink-0 text-[#888] whitespace-nowrap leading-[17px] ${r.clip}`}>{r.t}</span>
            <span className={`whitespace-nowrap leading-[17px] ${r.clip}`}>{r.m}</span>
          </div>
        ))}
      </div>
      <div className="ml-[13px] w-[10px] h-[116px] bg-[#f3f3f3] flex flex-col items-center pt-[5px] pb-[5px]">
        <svg viewBox="0 0 8 6" className="block w-[8px] h-[6px]"><path d="M4 0L8 6H0Z" fill="#ccc" /></svg>
        <div className="mt-[30px] w-[6px] h-[60px] bg-[#bdbdbd] rounded-[3px]" />
        <div className="flex-1" />
        <svg viewBox="0 0 8 6" className="block w-[8px] h-[6px]"><path d="M4 6L8 0H0Z" fill="#ccc" /></svg>
      </div>
    </div>
  </div>
);

const BottomTabs = () => (
  <div className="h-[29px] shrink-0 bg-[#eee] border-t border-[#ccc] flex text-[15px] text-[#333]">
    <div className="w-[30px] bg-[#ddd] flex items-center justify-center"><Pin /></div>
    <div className="w-[99px] border-r border-[#ccc] flex items-center justify-center">库</div>
    <div className="w-[99px] bg-white border-b-[3px] border-[#1890ff] text-[#1890ff] flex items-center justify-center">日志</div>
    <div className="w-[120px] border-r border-[#ccc] flex items-center justify-center">器件标准化</div>
    <div className="w-[99px] border-r border-[#ccc] flex items-center justify-center">DRC</div>
    <div className="w-[107px] border-r border-[#ccc] flex items-center justify-center">查找结果</div>
    <div className="w-[118px] border-r border-[#ccc] flex items-center justify-center">原理图DRC</div>
  </div>
);

export default function App() {
  return (
    <div className={`relative w-[1920px] h-[920px] bg-white overflow-hidden px-[5px] pb-[5px] ${FONT}`}>
      <div className="w-[1910px] h-[915px] rounded-[12px] overflow-hidden flex flex-col bg-[#eee] shadow-[0_1px_4px_rgba(0,0,0,0.2)]">
        <Header />
        <Toolbar />
        <div className="flex h-[673px] shrink-0">
          <div className="w-[30px] shrink-0 bg-[#eee] flex flex-col border-r border-[#ddd]">
            <div className="h-[29px] shrink-0 bg-[#ddd] flex items-center justify-center"><Pin /></div>
            <VTab text="所有工程" h="h-[90px]" />
            <div className="relative shrink-0">
              <VTab text="工程设计" active h="h-[88px]" />
              <div className="absolute left-[1px] top-0 bottom-0 w-[3px] bg-[#1890ff]" />
            </div>
            <VTab text="常用库" h="h-[90px]" />
          </div>
          <LeftPanel />
          <Center />
          <RightPanel />
          <div className="w-[31px] shrink-0 bg-[#eee] flex flex-col">
            <div className="h-[29px] shrink-0 bg-[#ddd] flex items-center justify-center"><Pin /></div>
            <div className="relative shrink-0">
              <VTab text="图层" active h="h-[90px]" />
              <div className="absolute right-[3px] top-0 bottom-0 w-[3px] bg-[#1890ff]" />
            </div>
            <VTab text="过滤" h="h-[88px]" />
            <VTab text="属性" h="h-[90px]" />
          </div>
        </div>
        <Bottom />
        <BottomTabs />
      </div>

      <div className="absolute left-[919px] top-[74px] w-[221px] h-[107px] bg-white border border-[#ddd] shadow-[0_1px_3px_rgba(0,0,0,0.15)] text-[15px] text-[#333]">
        <div className="h-[35px] flex items-center pl-[38px]">矩形</div>
        <div className="h-[35px] flex items-center pl-[38px]">圆形</div>
        <div className="h-[35px] flex items-center justify-between pl-[38px] pr-[15px]">
          <span>多边形</span><span className="text-[14px]">Alt+E</span>
        </div>
      </div>

      <svg viewBox="0 0 1920 920" className="absolute left-0 top-0 w-[1920px] h-[920px] pointer-events-none">
        <path d="M1545 218L1125 94" stroke="#ee2029" strokeWidth="5.5" strokeLinecap="round" />
        <path d="M1105 87L1130 84L1123 104Z" fill="#ee2029" />
        <path d="M1420 447L1549 250" stroke="#ee2029" strokeWidth="5.5" strokeLinecap="round" />
        <path d="M1557.5 236L1539.6 246.7L1555.5 259Z" fill="#ee2029" />
      </svg>
    </div>
  );
}
